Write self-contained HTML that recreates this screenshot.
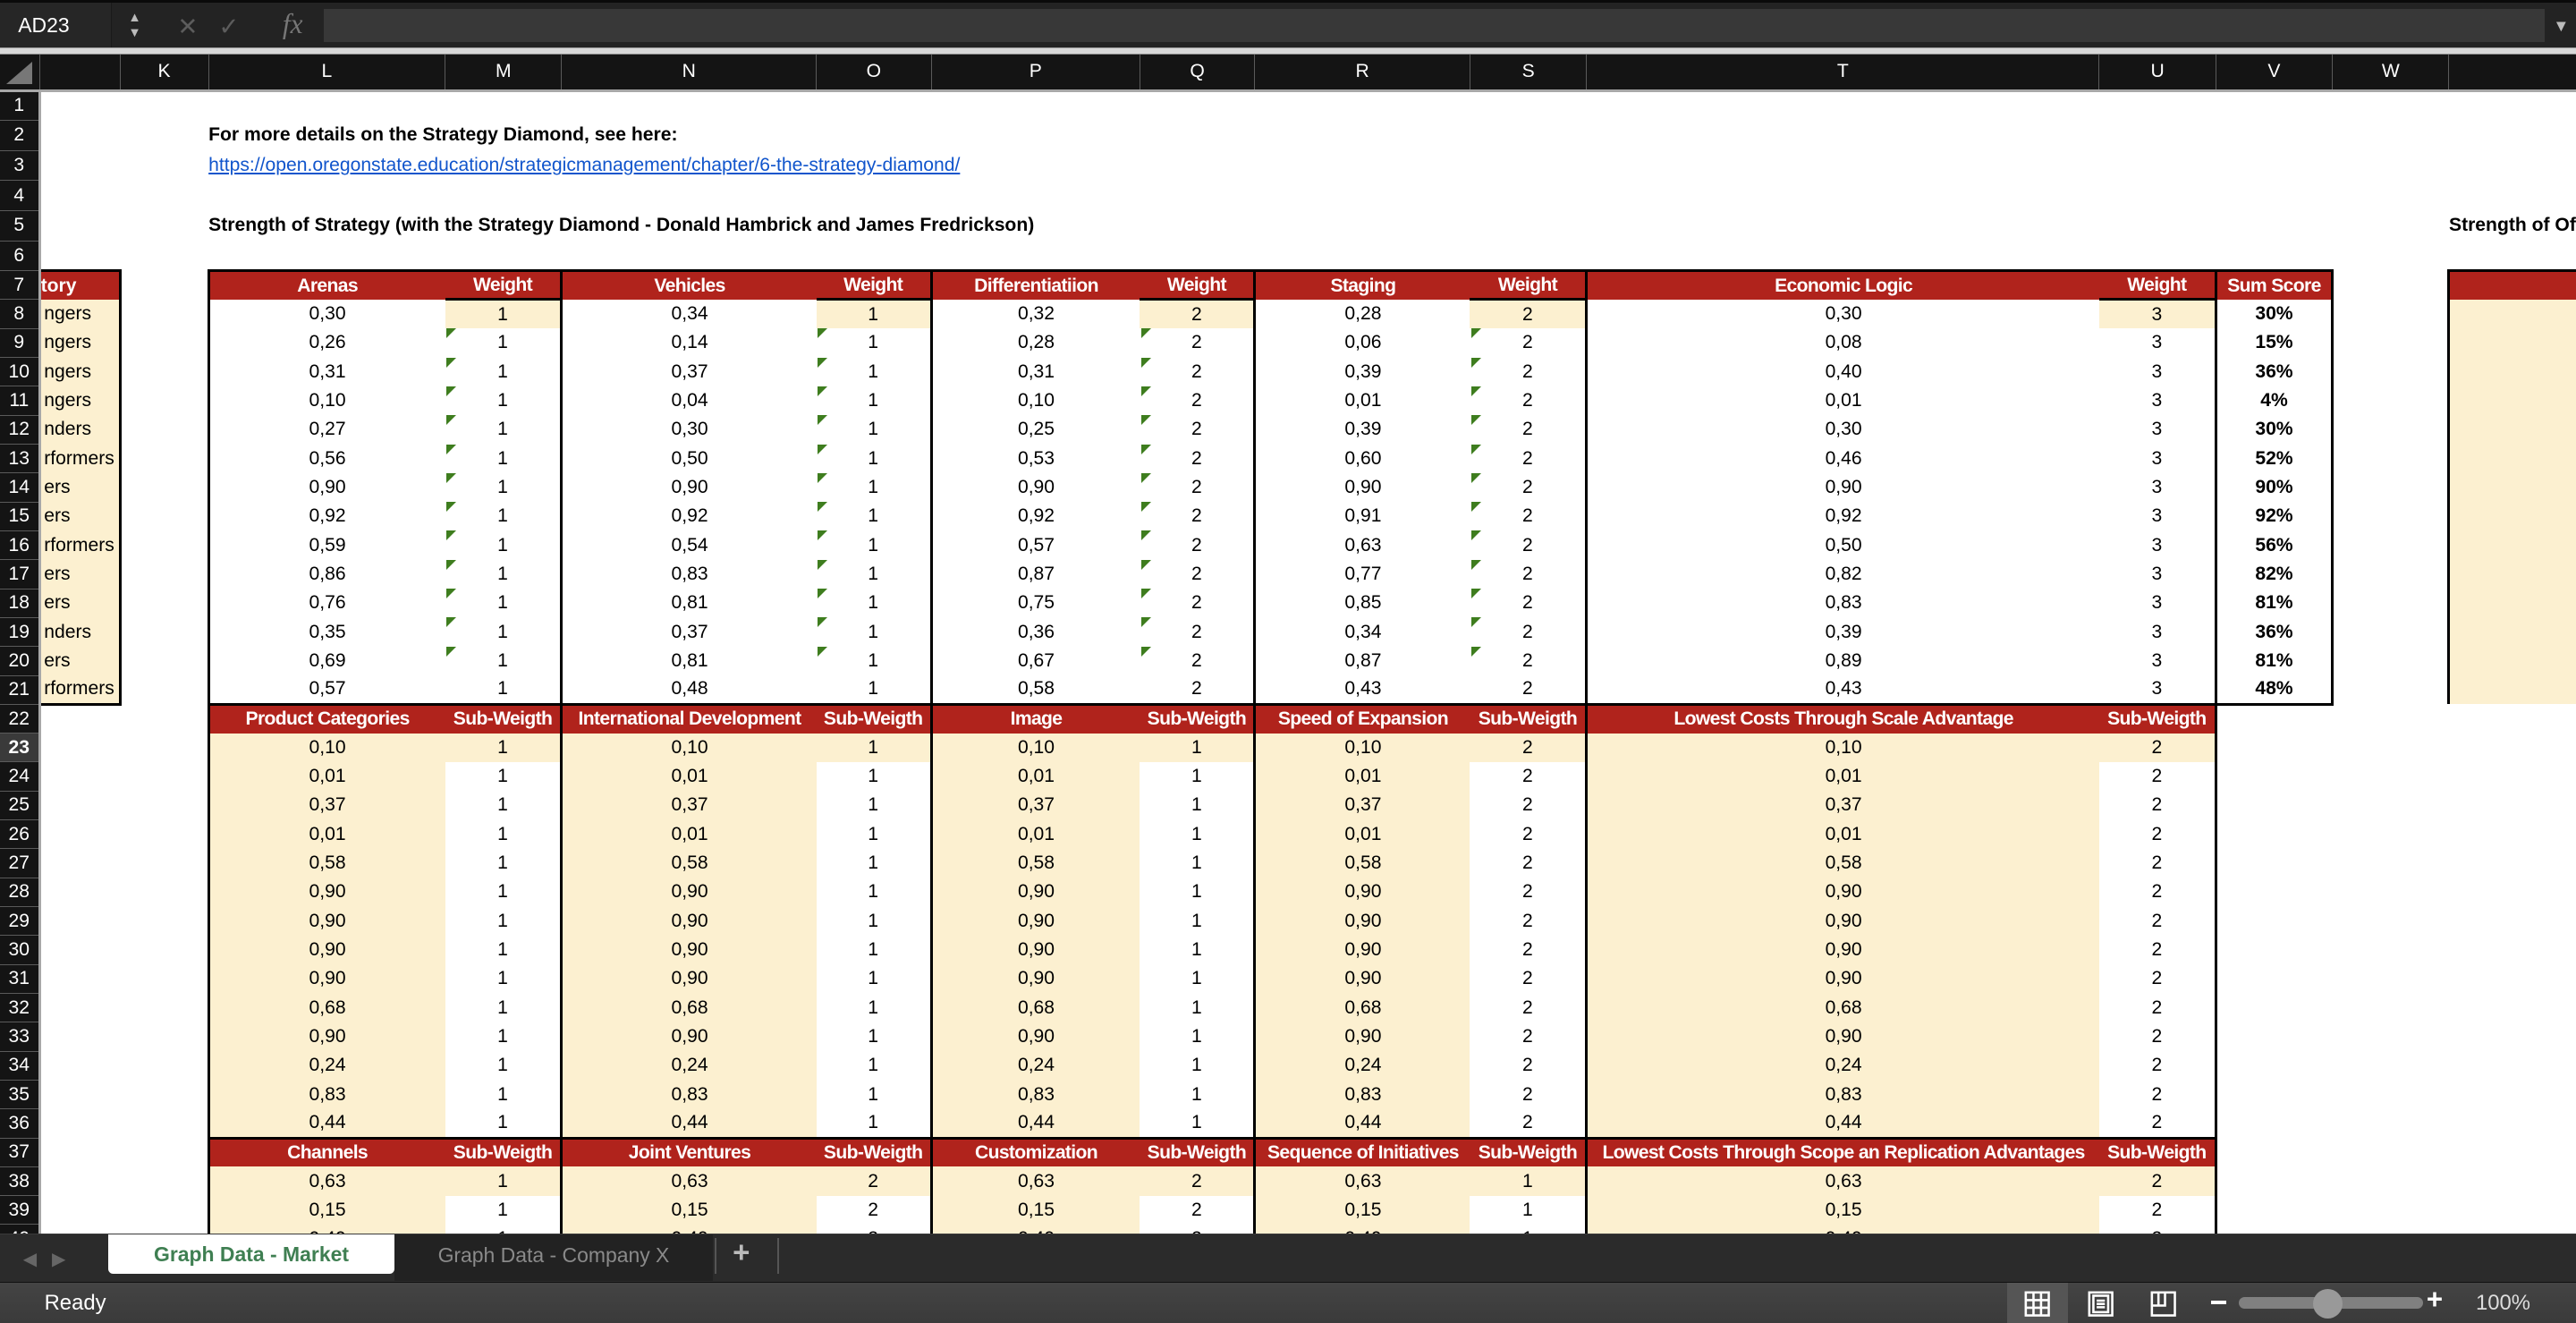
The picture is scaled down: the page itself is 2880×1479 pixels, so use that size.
<!DOCTYPE html>
<html><head><meta charset="utf-8">
<style>
html,body{margin:0;padding:0;background:#000;}
body{width:2880px;height:1478px;overflow:hidden;}
#w{zoom:1.83673;width:1568px;height:805px;position:relative;overflow:hidden;background:#fff;font-family:"Liberation Sans",sans-serif;}
#fb{position:absolute;left:0;top:0;width:1568px;height:31px;background:#232323;border-top:2px solid #0a0a0a;box-sizing:border-box;}
#nb{position:absolute;left:0;top:0;width:68px;height:29px;background:#262626;color:#fff;font-size:12.5px;line-height:28px;padding-left:11px;box-sizing:border-box;border-right:1px solid #1a1a1a;}
#ar{position:absolute;left:78px;top:5px;color:#bbb;font-size:8px;line-height:9px;}
#ic{position:absolute;left:108px;top:6px;color:#5c5c5c;font-size:15px;}
#fx{position:absolute;left:172px;top:3px;color:#777;font-family:"Liberation Serif",serif;font-style:italic;font-size:17px;}
#in{position:absolute;left:197px;top:4px;width:1352px;height:20px;background:#383838;}
#dd{position:absolute;left:1554px;top:8px;color:#bbb;font-size:10px;}
#sep{position:absolute;left:0;top:29px;width:1568px;height:4px;background:#d8d8d8;border-top:1px solid #999;border-bottom:1px solid #888;box-sizing:border-box;}
#g{position:absolute;left:0;top:33px;}
table{border-collapse:collapse;table-layout:fixed;font-size:11.5px;}
td{height:17.6px;padding:0;white-space:nowrap;overflow:hidden;text-align:center;color:#000;box-sizing:border-box;}
tr.tall td{height:18.3px;}
thead td{height:22px;background:#141414;color:#fff;font-size:11.5px;border-left:1px solid #5a5a5a;border-bottom:2px solid #a8a8a8;}
td.rn{background:#141414;color:#fff;border-bottom:1px solid #5a5a5a;border-right:2px solid #a8a8a8;font-size:11.5px;}
td.sel{background:#3a3a3a;font-weight:bold;}
.h{background:#b0231c;color:#fff;font-weight:bold;letter-spacing:-0.35px;border-top:2px solid #000;}
.hw{border-bottom:2px solid #000;}
.b{background:#fcf0d0;}
.l{border-left:2px solid #000;}
.r{border-right:2px solid #000;}
.bt{border-top:2px solid #000;}
.bold{font-weight:bold;}
.gt{position:relative;}
.gt::before{content:"";position:absolute;left:1px;top:0;border-top:6px solid #3e7d1e;border-right:6px solid transparent;}
.j{background:#fcf0d0;text-align:left;border-right:2px solid #000;padding-left:2px;}
td.jh{background:#b0231c;color:#fff;font-weight:bold;text-align:left;border-right:2px solid #000;border-top:2px solid #000;padding-left:0;}
.t{text-align:left;font-weight:bold;overflow:visible;}
#tabs{position:absolute;left:0;top:751px;width:1568px;height:29px;background:#2b2b2b;border-top:1px solid #3a3a3a;}
#st{position:absolute;left:0;top:780px;width:1568px;height:25px;background:linear-gradient(#444,#3a3a3a);border-top:1px solid #111;color:#fff;font-size:13px;}
</style></head><body><div id="w">
<div id="fb"><div id="nb">AD23</div><div id="ar">▲<br>▼</div><div id="ic">✕ &nbsp;&nbsp;✓</div><div id="fx">fx</div><div id="in"></div><div id="dd">▼</div></div>
<div id="sep"></div>
<div id="g"><table>
<colgroup><col style="width:24px"><col style="width:49px"><col style="width:54px"><col style="width:144px"><col style="width:71px"><col style="width:155px"><col style="width:70px"><col style="width:127px"><col style="width:70px"><col style="width:131px"><col style="width:71px"><col style="width:312px"><col style="width:71px"><col style="width:71px"><col style="width:71px"><col style="width:77px"></colgroup>
<thead><tr><td style="border-left:none;position:relative"><div style="position:absolute;left:4px;bottom:3px;border-bottom:14px solid #777;border-left:16px solid transparent"></div></td><td></td><td>K</td><td>L</td><td>M</td><td>N</td><td>O</td><td>P</td><td>Q</td><td>R</td><td>S</td><td>T</td><td>U</td><td>V</td><td>W</td><td></td></tr></thead>
<tbody>
<tr class="tall"><td class="rn">1</td><td colspan="15"></td></tr>
<tr class="tall"><td class="rn">2</td><td></td><td></td><td class="t" colspan="13">For more details on the Strategy Diamond, see here:</td></tr>
<tr class="tall"><td class="rn">3</td><td></td><td></td><td colspan="13" style="text-align:left;color:#1155cc;text-decoration:underline">https://open.oregonstate.education/strategicmanagement/chapter/6-the-strategy-diamond/</td></tr>
<tr class="tall"><td class="rn">4</td><td colspan="15"></td></tr>
<tr class="tall"><td class="rn">5</td><td></td><td></td><td class="t" colspan="11">Strength of Strategy (with the Strategy Diamond - Donald Hambrick and James Fredrickson)</td><td></td><td class="t">Strength of Of</td></tr>
<tr class="tall"><td class="rn">6</td><td colspan="15"></td></tr>
<tr><td class="rn">7</td><td class="jh">tory</td><td></td><td class="h l">Arenas</td><td class="h hw">Weight</td><td class="h l">Vehicles</td><td class="h hw">Weight</td><td class="h l">Differentiatiion</td><td class="h hw">Weight</td><td class="h l">Staging</td><td class="h hw">Weight</td><td class="h l">Economic Logic</td><td class="h hw">Weight</td><td class="h l r">Sum Score</td><td></td><td class="h l"></td></tr>
<tr><td class="rn">8</td><td class="j">ngers</td><td></td><td class="l">0,30</td><td class="b">1</td><td class="l">0,34</td><td class="b">1</td><td class="l">0,32</td><td class="b">2</td><td class="l">0,28</td><td class="b">2</td><td class="l">0,30</td><td class="b">3</td><td class="l r bold">30%</td><td></td><td class="b l"></td></tr>
<tr><td class="rn">9</td><td class="j">ngers</td><td></td><td class="l">0,26</td><td class="gt">1</td><td class="l">0,14</td><td class="gt">1</td><td class="l">0,28</td><td class="gt">2</td><td class="l">0,06</td><td class="gt">2</td><td class="l">0,08</td><td>3</td><td class="l r bold">15%</td><td></td><td class="b l"></td></tr>
<tr><td class="rn">10</td><td class="j">ngers</td><td></td><td class="l">0,31</td><td class="gt">1</td><td class="l">0,37</td><td class="gt">1</td><td class="l">0,31</td><td class="gt">2</td><td class="l">0,39</td><td class="gt">2</td><td class="l">0,40</td><td>3</td><td class="l r bold">36%</td><td></td><td class="b l"></td></tr>
<tr><td class="rn">11</td><td class="j">ngers</td><td></td><td class="l">0,10</td><td class="gt">1</td><td class="l">0,04</td><td class="gt">1</td><td class="l">0,10</td><td class="gt">2</td><td class="l">0,01</td><td class="gt">2</td><td class="l">0,01</td><td>3</td><td class="l r bold">4%</td><td></td><td class="b l"></td></tr>
<tr><td class="rn">12</td><td class="j">nders</td><td></td><td class="l">0,27</td><td class="gt">1</td><td class="l">0,30</td><td class="gt">1</td><td class="l">0,25</td><td class="gt">2</td><td class="l">0,39</td><td class="gt">2</td><td class="l">0,30</td><td>3</td><td class="l r bold">30%</td><td></td><td class="b l"></td></tr>
<tr><td class="rn">13</td><td class="j">rformers</td><td></td><td class="l">0,56</td><td class="gt">1</td><td class="l">0,50</td><td class="gt">1</td><td class="l">0,53</td><td class="gt">2</td><td class="l">0,60</td><td class="gt">2</td><td class="l">0,46</td><td>3</td><td class="l r bold">52%</td><td></td><td class="b l"></td></tr>
<tr><td class="rn">14</td><td class="j">ers</td><td></td><td class="l">0,90</td><td class="gt">1</td><td class="l">0,90</td><td class="gt">1</td><td class="l">0,90</td><td class="gt">2</td><td class="l">0,90</td><td class="gt">2</td><td class="l">0,90</td><td>3</td><td class="l r bold">90%</td><td></td><td class="b l"></td></tr>
<tr><td class="rn">15</td><td class="j">ers</td><td></td><td class="l">0,92</td><td class="gt">1</td><td class="l">0,92</td><td class="gt">1</td><td class="l">0,92</td><td class="gt">2</td><td class="l">0,91</td><td class="gt">2</td><td class="l">0,92</td><td>3</td><td class="l r bold">92%</td><td></td><td class="b l"></td></tr>
<tr><td class="rn">16</td><td class="j">rformers</td><td></td><td class="l">0,59</td><td class="gt">1</td><td class="l">0,54</td><td class="gt">1</td><td class="l">0,57</td><td class="gt">2</td><td class="l">0,63</td><td class="gt">2</td><td class="l">0,50</td><td>3</td><td class="l r bold">56%</td><td></td><td class="b l"></td></tr>
<tr><td class="rn">17</td><td class="j">ers</td><td></td><td class="l">0,86</td><td class="gt">1</td><td class="l">0,83</td><td class="gt">1</td><td class="l">0,87</td><td class="gt">2</td><td class="l">0,77</td><td class="gt">2</td><td class="l">0,82</td><td>3</td><td class="l r bold">82%</td><td></td><td class="b l"></td></tr>
<tr><td class="rn">18</td><td class="j">ers</td><td></td><td class="l">0,76</td><td class="gt">1</td><td class="l">0,81</td><td class="gt">1</td><td class="l">0,75</td><td class="gt">2</td><td class="l">0,85</td><td class="gt">2</td><td class="l">0,83</td><td>3</td><td class="l r bold">81%</td><td></td><td class="b l"></td></tr>
<tr><td class="rn">19</td><td class="j">nders</td><td></td><td class="l">0,35</td><td class="gt">1</td><td class="l">0,37</td><td class="gt">1</td><td class="l">0,36</td><td class="gt">2</td><td class="l">0,34</td><td class="gt">2</td><td class="l">0,39</td><td>3</td><td class="l r bold">36%</td><td></td><td class="b l"></td></tr>
<tr><td class="rn">20</td><td class="j">ers</td><td></td><td class="l">0,69</td><td class="gt">1</td><td class="l">0,81</td><td class="gt">1</td><td class="l">0,67</td><td class="gt">2</td><td class="l">0,87</td><td class="gt">2</td><td class="l">0,89</td><td>3</td><td class="l r bold">81%</td><td></td><td class="b l"></td></tr>
<tr><td class="rn">21</td><td class="j">rformers</td><td></td><td class="l">0,57</td><td>1</td><td class="l">0,48</td><td>1</td><td class="l">0,58</td><td>2</td><td class="l">0,43</td><td>2</td><td class="l">0,43</td><td>3</td><td class="l r bold">48%</td><td></td><td class="b l"></td></tr>
<tr><td class="rn">22</td><td class="bt"></td><td></td><td class="h l">Product Categories</td><td class="h">Sub-Weigth</td><td class="h l">International Development</td><td class="h">Sub-Weigth</td><td class="h l">Image</td><td class="h">Sub-Weigth</td><td class="h l">Speed of Expansion</td><td class="h">Sub-Weigth</td><td class="h l">Lowest Costs Through Scale Advantage</td><td class="h r">Sub-Weigth</td><td class="bt"></td><td></td><td></td></tr>
<tr><td class="rn sel">23</td><td></td><td></td><td class="l b">0,10</td><td class="b">1</td><td class="l b">0,10</td><td class="b">1</td><td class="l b">0,10</td><td class="b">1</td><td class="l b">0,10</td><td class="b">2</td><td class="l b">0,10</td><td class="b r">2</td><td></td><td></td><td></td></tr>
<tr><td class="rn">24</td><td></td><td></td><td class="l b">0,01</td><td>1</td><td class="l b">0,01</td><td>1</td><td class="l b">0,01</td><td>1</td><td class="l b">0,01</td><td>2</td><td class="l b">0,01</td><td class="r">2</td><td></td><td></td><td></td></tr>
<tr><td class="rn">25</td><td></td><td></td><td class="l b">0,37</td><td>1</td><td class="l b">0,37</td><td>1</td><td class="l b">0,37</td><td>1</td><td class="l b">0,37</td><td>2</td><td class="l b">0,37</td><td class="r">2</td><td></td><td></td><td></td></tr>
<tr><td class="rn">26</td><td></td><td></td><td class="l b">0,01</td><td>1</td><td class="l b">0,01</td><td>1</td><td class="l b">0,01</td><td>1</td><td class="l b">0,01</td><td>2</td><td class="l b">0,01</td><td class="r">2</td><td></td><td></td><td></td></tr>
<tr><td class="rn">27</td><td></td><td></td><td class="l b">0,58</td><td>1</td><td class="l b">0,58</td><td>1</td><td class="l b">0,58</td><td>1</td><td class="l b">0,58</td><td>2</td><td class="l b">0,58</td><td class="r">2</td><td></td><td></td><td></td></tr>
<tr><td class="rn">28</td><td></td><td></td><td class="l b">0,90</td><td>1</td><td class="l b">0,90</td><td>1</td><td class="l b">0,90</td><td>1</td><td class="l b">0,90</td><td>2</td><td class="l b">0,90</td><td class="r">2</td><td></td><td></td><td></td></tr>
<tr><td class="rn">29</td><td></td><td></td><td class="l b">0,90</td><td>1</td><td class="l b">0,90</td><td>1</td><td class="l b">0,90</td><td>1</td><td class="l b">0,90</td><td>2</td><td class="l b">0,90</td><td class="r">2</td><td></td><td></td><td></td></tr>
<tr><td class="rn">30</td><td></td><td></td><td class="l b">0,90</td><td>1</td><td class="l b">0,90</td><td>1</td><td class="l b">0,90</td><td>1</td><td class="l b">0,90</td><td>2</td><td class="l b">0,90</td><td class="r">2</td><td></td><td></td><td></td></tr>
<tr><td class="rn">31</td><td></td><td></td><td class="l b">0,90</td><td>1</td><td class="l b">0,90</td><td>1</td><td class="l b">0,90</td><td>1</td><td class="l b">0,90</td><td>2</td><td class="l b">0,90</td><td class="r">2</td><td></td><td></td><td></td></tr>
<tr><td class="rn">32</td><td></td><td></td><td class="l b">0,68</td><td>1</td><td class="l b">0,68</td><td>1</td><td class="l b">0,68</td><td>1</td><td class="l b">0,68</td><td>2</td><td class="l b">0,68</td><td class="r">2</td><td></td><td></td><td></td></tr>
<tr><td class="rn">33</td><td></td><td></td><td class="l b">0,90</td><td>1</td><td class="l b">0,90</td><td>1</td><td class="l b">0,90</td><td>1</td><td class="l b">0,90</td><td>2</td><td class="l b">0,90</td><td class="r">2</td><td></td><td></td><td></td></tr>
<tr><td class="rn">34</td><td></td><td></td><td class="l b">0,24</td><td>1</td><td class="l b">0,24</td><td>1</td><td class="l b">0,24</td><td>1</td><td class="l b">0,24</td><td>2</td><td class="l b">0,24</td><td class="r">2</td><td></td><td></td><td></td></tr>
<tr><td class="rn">35</td><td></td><td></td><td class="l b">0,83</td><td>1</td><td class="l b">0,83</td><td>1</td><td class="l b">0,83</td><td>1</td><td class="l b">0,83</td><td>2</td><td class="l b">0,83</td><td class="r">2</td><td></td><td></td><td></td></tr>
<tr><td class="rn">36</td><td></td><td></td><td class="l b">0,44</td><td>1</td><td class="l b">0,44</td><td>1</td><td class="l b">0,44</td><td>1</td><td class="l b">0,44</td><td>2</td><td class="l b">0,44</td><td class="r">2</td><td></td><td></td><td></td></tr>
<tr><td class="rn">37</td><td></td><td></td><td class="h l">Channels</td><td class="h">Sub-Weigth</td><td class="h l">Joint Ventures</td><td class="h">Sub-Weigth</td><td class="h l">Customization</td><td class="h">Sub-Weigth</td><td class="h l">Sequence of Initiatives</td><td class="h">Sub-Weigth</td><td class="h l">Lowest Costs Through Scope an Replication Advantages</td><td class="h r">Sub-Weigth</td><td></td><td></td><td></td></tr>
<tr><td class="rn">38</td><td></td><td></td><td class="l b">0,63</td><td class="b">1</td><td class="l b">0,63</td><td class="b">2</td><td class="l b">0,63</td><td class="b">2</td><td class="l b">0,63</td><td class="b">1</td><td class="l b">0,63</td><td class="b r">2</td><td></td><td></td><td></td></tr>
<tr><td class="rn">39</td><td></td><td></td><td class="l b">0,15</td><td>1</td><td class="l b">0,15</td><td>2</td><td class="l b">0,15</td><td>2</td><td class="l b">0,15</td><td>1</td><td class="l b">0,15</td><td class="r">2</td><td></td><td></td><td></td></tr>
<tr><td class="rn">40</td><td></td><td></td><td class="l b">0,40</td><td>1</td><td class="l b">0,40</td><td>2</td><td class="l b">0,40</td><td>2</td><td class="l b">0,40</td><td>1</td><td class="l b">0,40</td><td class="r">2</td><td></td><td></td><td></td></tr>
</tbody></table></div>
<div id="tabs">
<div style="position:absolute;left:14px;top:8px;color:#666;font-size:11px">◀ &nbsp; ▶</div>
<div style="position:absolute;left:66px;top:0;width:174px;height:24px;background:#fff;border-radius:0 0 3px 3px;color:#3f7f52;font-weight:bold;font-size:12.5px;text-align:center;line-height:24px">Graph Data - Market</div>
<div style="position:absolute;left:240px;top:0;width:194px;height:28px;background:#222;color:#8a8a8a;font-size:12.5px;text-align:center;line-height:26px">Graph Data - Company X</div>
<div style="position:absolute;left:435px;top:2px;width:1px;height:22px;background:#555"></div>
<div style="position:absolute;left:446px;top:1px;color:#bbb;font-size:18px;font-weight:bold">+</div>
<div style="position:absolute;left:473px;top:2px;width:1px;height:22px;background:#555"></div>
</div>
<div id="st">
<div style="position:absolute;left:27px;top:5px">Ready</div>
<div style="position:absolute;left:1222px;top:0;width:37px;height:25px;background:#555"></div>
<svg style="position:absolute;left:1232px;top:5px" width="16" height="16" viewBox="0 0 16 16" fill="none" stroke="#fff" stroke-width="1.4"><rect x="1" y="1" width="14" height="14"/><path d="M5.7 1v14M10.3 1v14M1 5.7h14M1 10.3h14"/></svg>
<svg style="position:absolute;left:1271px;top:5px" width="16" height="16" viewBox="0 0 16 16" fill="none" stroke="#fff" stroke-width="1.4"><rect x="1" y="1" width="14" height="14"/><rect x="3.5" y="3" width="9" height="10"/><path d="M5.5 6h5M5.5 8h5M5.5 10h5"/></svg>
<svg style="position:absolute;left:1309px;top:5px" width="16" height="16" viewBox="0 0 16 16" fill="none" stroke="#fff" stroke-width="1.4"><rect x="1" y="1" width="14" height="14"/><path d="M1 9h8V1M5 1v8"/></svg>
<div style="position:absolute;left:1346px;top:11px;width:9px;height:2px;background:#fff"></div>
<div style="position:absolute;left:1363px;top:9px;width:112px;height:7px;border-radius:4px;background:#808080"></div>
<div style="position:absolute;left:1408px;top:4px;width:18px;height:18px;border-radius:50%;background:#999"></div>
<div style="position:absolute;left:1477px;top:1px;font-size:17px;font-weight:bold">+</div>
<div style="position:absolute;left:1507px;top:5px;color:#ddd">100%</div>
</div>
</div></body></html>
